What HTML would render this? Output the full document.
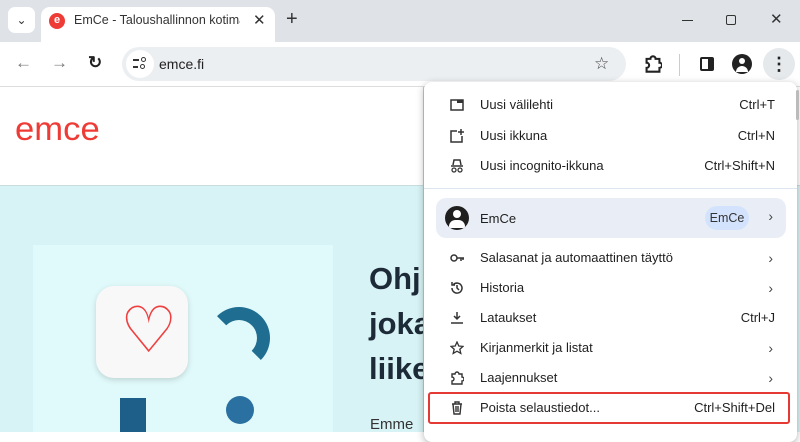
<!DOCTYPE html>
<html><head><meta charset="utf-8"><style>
*{margin:0;padding:0;box-sizing:border-box}
body{width:800px;height:432px;overflow:hidden;position:relative;font-family:"Liberation Sans",sans-serif;background:#fff}
.abs{position:absolute}
.menu{position:absolute;left:424px;top:82px;width:373px;height:360px;background:#fff;border-radius:8px;box-shadow:0 2px 8px rgba(0,0,0,.3)}
.it{position:absolute;left:0;width:373px;height:30px;font-size:13px;color:#1f1f1f;line-height:30px}
.it .t{position:absolute;left:56px}
.it .k{position:absolute;right:22px}
.it .ic{position:absolute;left:26px;top:8px;width:14px;height:14px}
.chev{position:absolute;right:24px;font-size:14px;color:#444}
</style></head><body>
<div class="abs" style="left:0;top:0;width:800px;height:42px;background:#dfe3e8"></div>
<div class="abs" style="left:8px;top:7px;width:27px;height:26px;background:#fff;border-radius:7px;font-size:12px;text-align:center;line-height:26px;color:#333">⌄</div>
<div class="abs" style="left:41px;top:7px;width:234px;height:36px;background:#fff;border-radius:9px 9px 0 0"></div>
<div class="abs" style="left:49px;top:13px;width:16px;height:16px;border-radius:50%;background:#ef3b36;color:#fff;font-size:11px;text-align:center;line-height:15px;font-weight:bold">e</div>
<div class="abs" style="left:74px;top:13px;font-size:12.5px;color:#333;width:166px;overflow:hidden;white-space:nowrap">EmCe - Taloushallinnon kotimai</div>
<div class="abs" style="left:253px;top:11px;font-size:15px;color:#333">✕</div>
<div class="abs" style="left:286px;top:8px;font-size:20px;color:#333">+</div>
<div class="abs" style="left:682px;top:20px;width:11px;height:1px;background:#333"></div>
<div class="abs" style="left:726px;top:15px;width:10px;height:10px;border:1px solid #333;border-radius:2px"></div>
<div class="abs" style="left:770px;top:10px;font-size:15px;color:#333">✕</div>
<div class="abs" style="left:0;top:42px;width:800px;height:45px;background:#fff;border-bottom:1px solid #ddd"></div>
<div class="abs" style="left:15px;top:53px;font-size:17px;color:#777">←</div>
<div class="abs" style="left:51px;top:53px;font-size:17px;color:#777">→</div>
<div class="abs" style="left:88px;top:53px;font-size:17px;color:#222;font-weight:bold">↻</div>
<div class="abs" style="left:122px;top:47px;width:504px;height:34px;background:#eceff2;border-radius:17px"></div>
<div class="abs" style="left:126px;top:50px;width:28px;height:28px;background:#fff;border-radius:50%"></div>
<div class="abs" style="left:133px;top:59px;width:6px;height:2px;background:#333"></div>
<div class="abs" style="left:133px;top:66px;width:5px;height:2px;background:#333"></div>
<div class="abs" style="left:141px;top:57px;width:5px;height:5px;border:1.5px solid #333;border-radius:50%"></div>
<div class="abs" style="left:140px;top:64px;width:5px;height:5px;border:1.5px solid #333;border-radius:50%"></div>
<div class="abs" style="left:159px;top:56px;font-size:14px;color:#222">emce.fi</div>
<div class="abs" style="left:594px;top:54px;font-size:17px;color:#444">☆</div>
<svg class="abs" style="left:644px;top:55px" width="18" height="18" viewBox="0 0 14 14"><path d="M2 3h3a2 2 0 0 1 4 0h3v3a2 2 0 0 1 0 4v3H2v-3a2 2 0 0 0 0-4z" fill="none" stroke="#222" stroke-width="1.6"/></svg>
<div class="abs" style="left:679px;top:54px;width:1px;height:22px;background:#ccc"></div>
<div class="abs" style="left:700px;top:57px;width:14px;height:14px;border:2px solid #222;border-radius:2px;border-right-width:6px"></div>
<div class="abs" style="left:732px;top:54px;width:20px;height:20px;background:#222;border-radius:50%;overflow:hidden"><div class="abs" style="left:7px;top:4px;width:6px;height:6px;background:#fff;border-radius:50%"></div><div class="abs" style="left:4px;top:12px;width:12px;height:6px;background:#fff;border-radius:6px 6px 0 0"></div></div>
<div class="abs" style="left:763px;top:48px;width:32px;height:32px;background:#e6e9ec;border-radius:50%;text-align:center;line-height:32px;font-size:18px;font-weight:bold;color:#222">⋮</div>
<div class="abs" style="left:15px;top:110px;font-size:33px;color:#ef3b36;transform:scaleX(1.05);transform-origin:left">emce</div>
<div class="abs" style="left:0;top:185px;width:800px;height:247px;background:#d8f3f5;border-top:1px solid #c9dde0"></div>
<div class="abs" style="left:33px;top:245px;width:300px;height:187px;background:#e0f9fa"></div>
<div class="abs" style="left:96px;top:286px;width:92px;height:92px;background:#f8f8f8;border-radius:18px;box-shadow:0 2px 6px rgba(0,0,0,.15)"></div>
<div class="abs" style="left:120px;top:298px;font-size:64px;color:#ef4040;line-height:64px">♡</div>
<div class="abs" style="left:208px;top:307px;width:62px;height:62px;border:13px solid #1f6d90;border-radius:50%;border-bottom-color:transparent;border-left-color:transparent"></div>
<div class="abs" style="left:226px;top:396px;width:28px;height:28px;border-radius:50%;background:#2a70a0"></div>
<div class="abs" style="left:120px;top:398px;width:26px;height:34px;background:#1e5f8a"></div>
<div class="abs" style="left:369px;top:256px;font-size:31px;font-weight:bold;color:#1d2b38;line-height:45px">Ohj<br>joka<br>liike</div>
<div class="abs" style="left:370px;top:416px;font-size:15px;color:#333">Emme</div>
<div class="abs" style="left:423px;top:87px;width:1px;height:345px;background:#ccc"></div>
<div class="menu">
 <div class="it" style="top:8px"><svg class="ic" viewBox="0 0 14 14"><rect x="1" y="2" width="12" height="10" fill="none" stroke="#333" stroke-width="1.5"/><rect x="7" y="2" width="6" height="3" fill="#333"/></svg><span class="t">Uusi välilehti</span><span class="k">Ctrl+T</span></div>
 <div class="it" style="top:39px"><svg class="ic" viewBox="0 0 14 14"><path d="M7 2H1v11h11V7" fill="none" stroke="#333" stroke-width="1.5"/><path d="M11 0v6M8 3h6" stroke="#333" stroke-width="1.5"/></svg><span class="t">Uusi ikkuna</span><span class="k">Ctrl+N</span></div>
 <div class="it" style="top:69px"><svg class="ic" viewBox="0 0 14 14"><path d="M3 6l1-5h6l1 5M1 7h12" stroke="#333" stroke-width="1.5" fill="none"/><circle cx="4" cy="11" r="2" fill="none" stroke="#333" stroke-width="1.3"/><circle cx="10" cy="11" r="2" fill="none" stroke="#333" stroke-width="1.3"/></svg><span class="t">Uusi incognito-ikkuna</span><span class="k">Ctrl+Shift+N</span></div>
 <div class="abs" style="left:0;top:106px;width:373px;height:1px;background:#dde5f0"></div>
 <div class="abs" style="left:12px;top:116px;width:350px;height:40px;background:#e9eef6;border-radius:10px"></div>
 <div class="abs" style="left:21px;top:124px;width:24px;height:24px;background:#1f1f1f;border-radius:50%;overflow:hidden"><div class="abs" style="left:8px;top:4px;width:8px;height:8px;background:#fff;border-radius:50%"></div><div class="abs" style="left:4px;top:14px;width:16px;height:8px;background:#fff;border-radius:8px 8px 2px 2px"></div></div>
 <div class="abs" style="left:56px;top:129px;font-size:13px;color:#1f1f1f">EmCe</div>
 <div class="abs" style="left:281px;top:124px;width:44px;height:24px;background:#d3e3fd;border-radius:12px;font-size:12.5px;color:#333;text-align:center;line-height:24px">EmCe</div>
 <div class="chev" style="top:126px">›</div>
 <div class="it" style="top:161px"><svg class="ic" viewBox="0 0 14 14"><circle cx="4" cy="7" r="3" fill="none" stroke="#333" stroke-width="1.5"/><path d="M7 7h7M11 7v3M13 7v2" stroke="#333" stroke-width="1.5"/></svg><span class="t">Salasanat ja automaattinen täyttö</span><span class="chev" style="right:24px">›</span></div>
 <div class="it" style="top:191px"><svg class="ic" viewBox="0 0 14 14"><path d="M2 7a5 5 0 1 0 1.5-3.5M2 1v3h3M7 4v3l2 2" fill="none" stroke="#333" stroke-width="1.5"/></svg><span class="t">Historia</span><span class="chev" style="right:24px">›</span></div>
 <div class="it" style="top:221px"><svg class="ic" viewBox="0 0 14 14"><path d="M7 1v7M4 5l3 3 3-3M1 12h12" fill="none" stroke="#333" stroke-width="1.5"/></svg><span class="t">Lataukset</span><span class="k">Ctrl+J</span></div>
 <div class="it" style="top:251px"><svg class="ic" viewBox="0 0 14 14"><path d="M7 1l1.8 4 4.2.4-3.2 2.8 1 4.2L7 10.2 3.2 12.4l1-4.2L1 5.4l4.2-.4z" fill="none" stroke="#333" stroke-width="1.3"/></svg><span class="t">Kirjanmerkit ja listat</span><span class="chev" style="right:24px">›</span></div>
 <div class="it" style="top:281px"><svg class="ic" viewBox="0 0 14 14"><path d="M2 3h3a2 2 0 0 1 4 0h3v3a2 2 0 0 1 0 4v3H2v-3a2 2 0 0 0 0-4z" fill="none" stroke="#333" stroke-width="1.4"/></svg><span class="t">Laajennukset</span><span class="chev" style="right:24px">›</span></div>
 <div class="abs" style="left:4px;top:310px;width:362px;height:32px;border:2px solid #e53935;border-radius:3px"></div>
 <div class="it" style="top:311px"><svg class="ic" viewBox="0 0 14 14"><path d="M2 3h10M5 3V1h4v2M3 3l1 10h6l1-10M6 5v6M8 5v6" fill="none" stroke="#333" stroke-width="1.4"/></svg><span class="t">Poista selaustiedot...</span><span class="k">Ctrl+Shift+Del</span></div>
</div>
<div class="abs" style="left:796px;top:90px;width:3px;height:30px;background:#bbb;border-radius:2px"></div>
</body></html>
